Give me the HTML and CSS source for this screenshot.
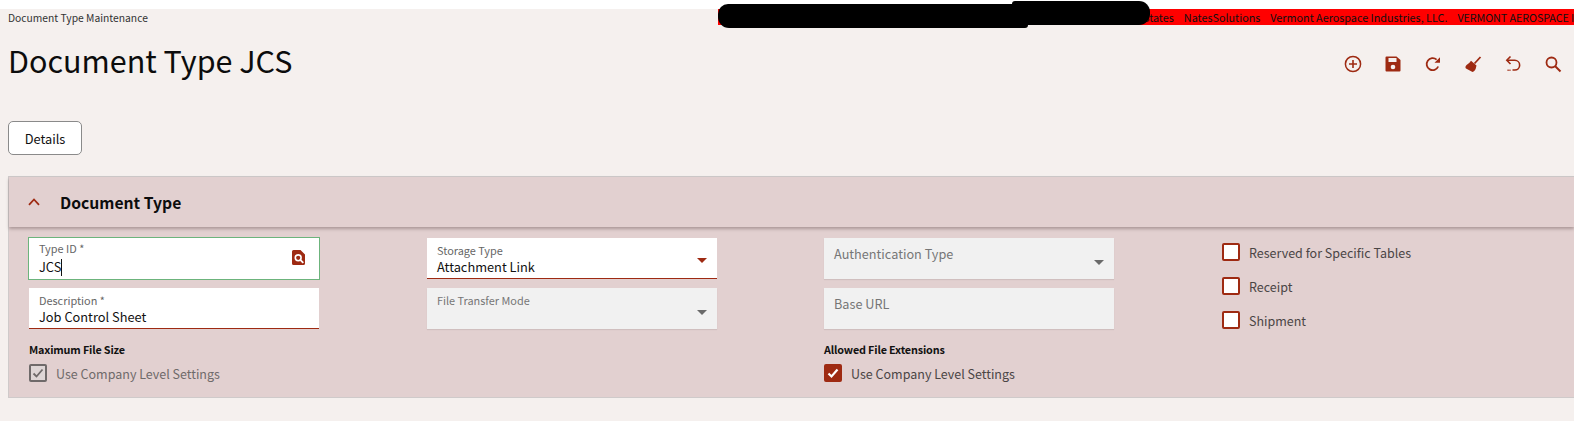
FILE: index.html
```html
<!DOCTYPE html>
<html lang="en">
<head>
<meta charset="utf-8">
<title>Document Type Maintenance</title>
<link rel="stylesheet" href="styles.css">
</head>
<body>
<div class="page">
  <div class="topbar">
    <div class="crumb">Document Type Maintenance</div>
    <div class="env"><span>States</span><span>NatesSolutions</span><span>Vermont Aerospace Industries, LLC.</span><span class="env-caps">VERMONT AEROSPACE I</span></div>
    <div class="redact"></div>
    <div class="redact redact-b"></div>
  </div>
  <div class="titlerow">
    <h1>Document Type JCS</h1>
    <div class="tools">
      <svg class="tool" viewBox="0 0 18 18"><circle cx="9" cy="9" r="7.6" fill="none" stroke="#9e2a12" stroke-width="1.5"/><path d="M9 5v8M5 9h8" stroke="#9e2a12" stroke-width="1.6"/></svg>
      <svg class="tool" viewBox="0 0 18 18"><path d="M2.500 1.500h10L16.500 5v10.500a1 1 0 0 1-1 1h-13a1 1 0 0 1-1-1v-13a1 1 0 0 1 1-1z" fill="#9e2a12"/><rect x="4.500" y="3" width="8" height="4" fill="#f5f0ee"/><circle cx="9" cy="12" r="2.300" fill="#f5f0ee"/></svg>
      <svg class="tool" viewBox="0 0 18 18"><path d="M14.200 11.500A6 6 0 1 1 12.600 4.600" fill="none" stroke="#9e2a12" stroke-width="1.800"/><path d="M10.500 7.800h5.500V2.300z" fill="#9e2a12"/></svg>
      <svg class="tool" viewBox="0 0 18 18"><path d="M10.500 8.500L16.500 2" stroke="#9e2a12" stroke-width="1.800"/><path d="M7 5.800l5.500 4.700-.8 3.200c-.5 1.600-1.700 2.800-3.200 3.300L2 13.500c-.6-.7-.8-1.700-.2-2.500.6-1.200 3.200-2.200 5.200-5.200z" fill="#9e2a12"/></svg>
      <svg class="tool" viewBox="0 0 18 18"><path d="M6.500 1.500L2.800 5.200 6.500 9" fill="none" stroke="#9e2a12" stroke-width="1.600"/><path d="M3 5.300h7.800a4.700 4.700 0 0 1 0 9.700H8.500" fill="none" stroke="#9e2a12" stroke-width="1.600"/><path d="M3.500 15.200h3" stroke="#9e2a12" stroke-width="1.600" stroke-dasharray="1.200 .7"/></svg>
      <svg class="tool" viewBox="0 0 18 18"><circle cx="7.500" cy="7.500" r="5" fill="none" stroke="#9e2a12" stroke-width="1.800"/><path d="M11 11l5.500 5.500" stroke="#9e2a12" stroke-width="2"/></svg>
    </div>
  </div>
  <button class="details" type="button">Details</button>
  <section class="panel">
    <header class="panel-head">
      <svg class="chev" viewBox="0 0 12 8"><path d="M1 6.800L6 1.500l5 5.300" fill="none" stroke="#9e2a12" stroke-width="1.800"/></svg>
      <h2>Document Type</h2>
    </header>
    <div class="panel-body">
      <div class="col">
        <div class="field focus">
          <label>Type ID *</label>
          <div class="value">JCS<span class="caret"></span></div>
          <svg class="lookup" viewBox="0 0 13 15"><path d="M1.500 0H8.500L13 4.500V13.500a1.500 1.500 0 0 1-1.500 1.500H1.500A1.500 1.500 0 0 1 0 13.500V1.500A1.500 1.500 0 0 1 1.500 0z" fill="#9e2a12"/><circle cx="6.200" cy="7.800" r="2.900" fill="none" stroke="#fff" stroke-width="1.600"/><path d="M8.300 9.900l3 3" stroke="#fff" stroke-width="1.800"/></svg>
        </div>
        <div class="field active">
          <label>Description *</label>
          <div class="value">Job Control Sheet</div>
        </div>
        <h3>Maximum File Size</h3>
        <div class="check disabled">
          <span class="box"><svg viewBox="0 0 14 14"><path d="M2.500 7.500l3 3 6-7" fill="none" stroke="#6f6a6a" stroke-width="1.800"/></svg></span>
          <span class="check-label">Use Company Level Settings</span>
        </div>
      </div>
      <div class="col">
        <div class="field active">
          <label>Storage Type</label>
          <div class="value">Attachment Link</div>
          <span class="arrow"></span>
        </div>
        <div class="field off">
          <label>File Transfer Mode</label>
          <div class="value"></div>
          <span class="arrow"></span>
        </div>
      </div>
      <div class="col">
        <div class="field off empty">
          <label>Authentication Type</label>
          <span class="arrow"></span>
        </div>
        <div class="field off empty">
          <label>Base URL</label>
        </div>
        <h3>Allowed File Extensions</h3>
        <div class="check checked">
          <span class="box"><svg viewBox="0 0 14 14"><path d="M2.500 7.500l3 3 6-7" fill="none" stroke="#fff" stroke-width="2.200"/></svg></span>
          <span class="check-label">Use Company Level Settings</span>
        </div>
      </div>
      <div class="col col-checks">
        <div class="check"><span class="box"></span><span class="check-label">Reserved for Specific Tables</span></div>
        <div class="check"><span class="box"></span><span class="check-label">Receipt</span></div>
        <div class="check"><span class="box"></span><span class="check-label">Shipment</span></div>
      </div>
    </div>
  </section>
</div>
</body>
</html>
```

FILE: styles.css
```css
* { box-sizing: border-box; }
html, body { margin: 0; height: 100%; overflow: hidden; background: #fff; }
body { font-family: "Noto Sans CJK SC", "Source Sans Pro", "Noto Sans", sans-serif; color: #111; }
.page { margin-top: 9px; height: 412px; background: #f5f0ee; padding-left: 8px; }

.topbar { position: relative; height: 16px; display: flex; justify-content: space-between; }
.crumb { font-size: 10.300px; line-height: 18px; color: #333; white-space: nowrap; }
.env { width: 856px; background: #f00; padding-left: 425px; display: flex; gap: 10px; overflow: hidden; white-space: nowrap; font-size: 10.800px; line-height: 16px; color: #111; flex-shrink: 0; }
.env span { flex: none; }
.env-caps { letter-spacing: -.1px; }
.redact { position: absolute; left: 710px; top: -5px; width: 310px; height: 24px; background: #000; border-radius: 10px 3px 3px 11px; }
.redact-b { left: 1004px; top: -8px; width: 138px; height: 24px; border-radius: 3px 11px 11px 3px; }

.titlerow { height: 62px; padding-top: 16px; display: flex; justify-content: space-between; align-items: flex-start; }
h1 { margin: 0; font-size: 30.500px; line-height: 38px; font-weight: 400; color: #0c0c0c; white-space: nowrap; }
.tools { display: flex; gap: 22px; margin: 14px 12px 0 0; }
.tool { width: 18px; height: 18px; display: block; }

.details { display: block; width: 74px; height: 34px; margin: 34px 0 21px; padding: 0; background: #fff; border: 1px solid #8a8a8a; border-radius: 5px; font: inherit; font-size: 12.800px; color: #111; }

.panel { background: #e2d0d0; border: 1px solid #cfcaca; border-right: 0; height: 222px; }
.panel-head { height: 50px; display: flex; align-items: center; padding-left: 19px; gap: 20px; box-shadow: 0 2px 3px rgba(90, 70, 70, .4); position: relative; }
.chev { width: 12px; height: 8px; }
h2 { margin: 0; font-size: 15.700px; font-weight: 700; color: #0d0d0d; }

.panel-body { display: grid; grid-template-columns: 398px 397px 398px 1fr; padding: 11px 0 0 20px; }
.col { display: flex; flex-direction: column; width: 290px; }
.field { position: relative; height: 41px; margin-bottom: 9px; background: #fff; padding: 5px 10px 0; }
.field label { display: block; font-size: 10.900px; line-height: 14px; margin-bottom: 1px; color: #666; }
.value { font-size: 12.800px; line-height: 18px; color: #111; height: 18px; }
.field.active { border-bottom: 1px solid #9e2a12; }
.field.focus { outline: 1px solid #6cb47c; padding-top: 3px; }
.field.focus label { margin-bottom: 3px; }
.field.off { background: #f1f1f1; box-shadow: 0 1px 1px rgba(0, 0, 0, .08); }
.field.off label { color: #767676; }
.field.empty label { font-size: 12.700px; line-height: 18px; padding-top: 2px; }
.caret { display: inline-block; width: 1px; height: 17px; background: #111; vertical-align: -4px; }
.lookup { position: absolute; right: 14px; top: 12px; width: 13px; height: 15px; }
.arrow { position: absolute; right: 10px; top: 20px; border: 5px solid transparent; border-top: 5px solid #9e2a12; border-bottom: 0; }
.field.off .arrow { border-top-color: #6a6a6a; top: 22px; }

h3 { margin: 3px 0 0; font-size: 10.800px; letter-spacing: -.15px; line-height: 17px; font-weight: 700; color: #111; }
.check { display: flex; align-items: center; gap: 9px; height: 18px; margin-top: 6px; font-size: 12.500px; }
.box { width: 18px; height: 18px; flex: none; background: #fff; border: 2px solid #9e2a12; border-radius: 2px; display: flex; align-items: center; justify-content: center; }
.box svg { width: 14px; height: 14px; display: block; }
.check-label { color: #4a4545; white-space: nowrap; }
.checked .box { background: #9e2a12; }
.disabled .box { background: #ded6d6; border-color: #6f6a6a; }
.disabled .check-label { color: #6f6a6a; }
.col-checks { gap: 16px; padding-top: 5px; }
.col-checks .check { margin: 0; }
```
